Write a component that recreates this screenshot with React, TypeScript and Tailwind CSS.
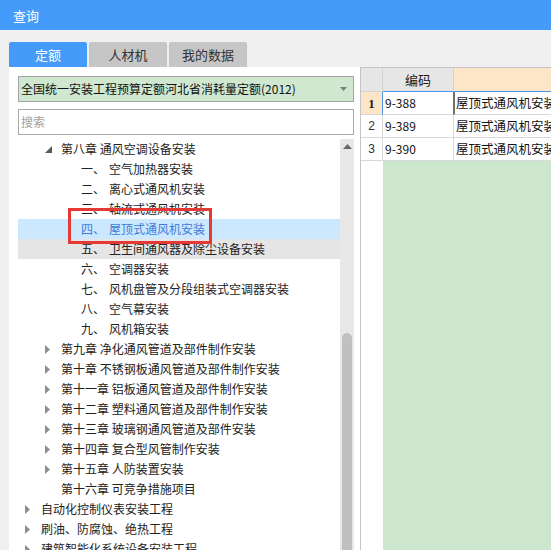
import React from "react";

type Node = {
  level: 0 | 1 | 2;
  text: string;
  prefix?: string;
  arrow?: "open" | "closed";
  state?: "selected" | "hover";
};

const nodes: Node[] = [
  { level: 1, text: "第八章 通风空调设备安装", arrow: "open" },
  { level: 2, prefix: "一、", text: "空气加热器安装" },
  { level: 2, prefix: "二、", text: "离心式通风机安装" },
  { level: 2, prefix: "三、", text: "轴流式通风机安装" },
  { level: 2, prefix: "四、", text: "屋顶式通风机安装", state: "selected" },
  { level: 2, prefix: "五、", text: "卫生间通风器及除尘设备安装", state: "hover" },
  { level: 2, prefix: "六、", text: "空调器安装" },
  { level: 2, prefix: "七、", text: "风机盘管及分段组装式空调器安装" },
  { level: 2, prefix: "八、", text: "空气幕安装" },
  { level: 2, prefix: "九、", text: "风机箱安装" },
  { level: 1, text: "第九章 净化通风管道及部件制作安装", arrow: "closed" },
  { level: 1, text: "第十章 不锈钢板通风管道及部件制作安装", arrow: "closed" },
  { level: 1, text: "第十一章 铝板通风管道及部件制作安装", arrow: "closed" },
  { level: 1, text: "第十二章 塑料通风管道及部件制作安装", arrow: "closed" },
  { level: 1, text: "第十三章 玻璃钢通风管道及部件安装", arrow: "closed" },
  { level: 1, text: "第十四章 复合型风管制作安装", arrow: "closed" },
  { level: 1, text: "第十五章 人防装置安装", arrow: "closed" },
  { level: 1, text: "第十六章 可竞争措施项目" },
  { level: 0, text: "自动化控制仪表安装工程", arrow: "closed" },
  { level: 0, text: "刷油、防腐蚀、绝热工程", arrow: "closed" },
  { level: 0, text: "建筑智能化系统设备安装工程", arrow: "closed" },
];

const indent = ["pl-0", "pl-[20px]", "pl-[40px]"];

function Arrow({ kind }: { kind?: "open" | "closed" }) {
  if (kind === "open") {
    return (
      <svg width="7" height="7" viewBox="0 0 7 7">
        <polygon points="7,0 7,7 0,7" fill="#595959" />
      </svg>
    );
  }
  if (kind === "closed") {
    return (
      <svg width="5" height="9" viewBox="0 0 5 9">
        <polygon points="0,0 5,4.5 0,9" fill="#8e8e8e" />
      </svg>
    );
  }
  return null;
}

function TreeRow({ n }: { n: Node }) {
  const bg =
    n.state === "selected"
      ? "bg-[#cce8ff]"
      : n.state === "hover"
      ? "bg-[#e5e5e5]"
      : "";
  const color = n.state === "selected" ? "text-[#3d7bd9]" : "text-[#222222]";
  return (
    <div className={`flex h-[20px] items-center whitespace-nowrap ${bg} ${indent[n.level]}`}>
      <div className="flex h-full w-[23px] shrink-0 items-center pl-[7px]">
        <Arrow kind={n.arrow} />
      </div>
      {n.prefix && <span className={`w-[28px] shrink-0 ${color}`}>{n.prefix}</span>}
      <span className={color}>{n.text}</span>
    </div>
  );
}

export default function App() {
  return (
    <div className="relative flex h-[550px] w-[551px] flex-col overflow-hidden bg-[#f0f0f0] font-['Noto_Sans_CJK_SC','Noto_Sans',sans-serif] text-[12px] leading-none">
      {/* title bar */}
      <div className="flex h-[30px] shrink-0 items-center bg-[#449bf9] pl-[13px] text-[13px] text-white">
        查询
      </div>

      {/* tabs */}
      <div className="flex shrink-0 gap-[2px] pl-[9px] pt-[12px]">
        <div className="flex h-[25px] w-[78px] items-center justify-center rounded-t-[2px] bg-[#449bf9] text-[13px] text-white">
          定额
        </div>
        <div className="flex h-[25px] w-[78px] items-center justify-center rounded-t-[2px] bg-[#c6c6c6] text-[13px] text-[#333333]">
          人材机
        </div>
        <div className="flex h-[25px] w-[78px] items-center justify-center rounded-t-[2px] bg-[#c6c6c6] text-[13px] text-[#333333]">
          我的数据
        </div>
      </div>

      {/* main */}
      <div className="flex min-h-0 flex-1 pl-[9px]">
        {/* left panel */}
        <div className="flex w-[351px] shrink-0 flex-col bg-white pl-[9px] pr-[6px] pt-[9px]">
          <div className="flex h-[26px] items-center justify-between border border-[#a3a3a3] bg-[#cfe8cf] pl-[2px] pr-[6px] text-[12px] text-[#111111]">
            <span>全国统一安装工程预算定额河北省消耗量定额(2012)</span>
            <svg width="7" height="4" viewBox="0 0 7 4">
              <polygon points="0,0 7,0 3.5,4" fill="#7d7d7d" />
            </svg>
          </div>
          <div className="mt-[7px] flex h-[26px] items-center border border-[#a9a9a9] bg-white pl-[2px] text-[12px] text-[#a0a0a0]">
            搜索
          </div>
          <div className="mt-[4px] flex min-h-0 flex-1 overflow-hidden">
            <div className="w-[322px] shrink-0">
              {nodes.map((n, i) => (
                <TreeRow key={i} n={n} />
              ))}
            </div>
            <div className="flex w-[14px] shrink-0 flex-col bg-[#e8e8e8]">
              <div className="flex h-[12px] shrink-0 items-center justify-center pt-[2px]">
                <svg width="9" height="5" viewBox="0 0 9 5">
                  <polygon points="4.5,0 9,5 0,5" fill="#6a6a6a" />
                </svg>
              </div>
              <div className="h-[182px] shrink-0" />
              <div className="mx-[2px] flex-1 rounded-t-[5px] bg-[#c0c0c0]" />
            </div>
          </div>
        </div>

        {/* table */}
        <div className="flex min-w-0 flex-1 flex-col border-l border-t border-[#c4c4c4] bg-white">
          {/* header */}
          <div className="flex h-[24px] shrink-0">
            <div className="w-[22px] shrink-0 border-b border-r border-[#d2d2d2] bg-[#e6e6e6]" />
            <div className="flex w-[71px] shrink-0 items-center justify-center border-b border-r border-b-[#4c94e8] border-r-[#d2d2d2] bg-[#e6e6e6] text-[13px] text-[#1a1a1a]">
              编码
            </div>
            <div className="flex-1 border-b border-[#4c94e8] bg-[#fde6c8]" />
          </div>
          {/* row 1 */}
          <div className="flex h-[23px] shrink-0">
            <div className="flex w-[22px] shrink-0 items-center justify-center border-b border-r border-b-[#d8d8d8] border-r-[#4c94e8] bg-[#fde6c8] font-['Liberation_Serif',serif] text-[13px] font-bold text-[#222222]">
              1
            </div>
            <div className="flex w-[71px] shrink-0 items-center border-b border-r border-b-[#d8d8d8] border-r-[#6f6f6f] pl-[2px] text-[12px] text-[#111111]">
              9-388
            </div>
            <div className="flex flex-1 items-center overflow-hidden whitespace-nowrap border-b border-l border-b-[#d8d8d8] border-l-[#6f6f6f] pl-[1px] text-[12.5px] text-[#111111]">
              屋顶式通风机安装
            </div>
          </div>
          {/* rows 2,3 */}
          {[
            ["2", "9-389"],
            ["3", "9-390"],
          ].map(([num, code]) => (
            <div key={num} className="flex h-[23px] shrink-0">
              <div className="flex w-[22px] shrink-0 items-center justify-center border-b border-r border-[#d8d8d8] font-['Liberation_Sans',sans-serif] text-[12px] text-[#333333]">
                {num}
              </div>
              <div className="flex w-[71px] shrink-0 items-center border-b border-r border-[#d8d8d8] pl-[2px] text-[12px] text-[#111111]">
                {code}
              </div>
              <div className="flex flex-1 items-center overflow-hidden whitespace-nowrap border-b border-[#d8d8d8] pl-[2px] text-[12.5px] text-[#111111]">
                屋顶式通风机安装
              </div>
            </div>
          ))}
          {/* empty area */}
          <div className="flex flex-1">
            <div className="w-[22px] shrink-0 bg-white" />
            <div className="flex-1 bg-[#cde7ce]" />
          </div>
        </div>
      </div>

      {/* red annotation box */}
      <div className="absolute left-[68px] top-[208px] h-[36px] w-[144px] border-[3px] border-[#e53935]" />
    </div>
  );
}
